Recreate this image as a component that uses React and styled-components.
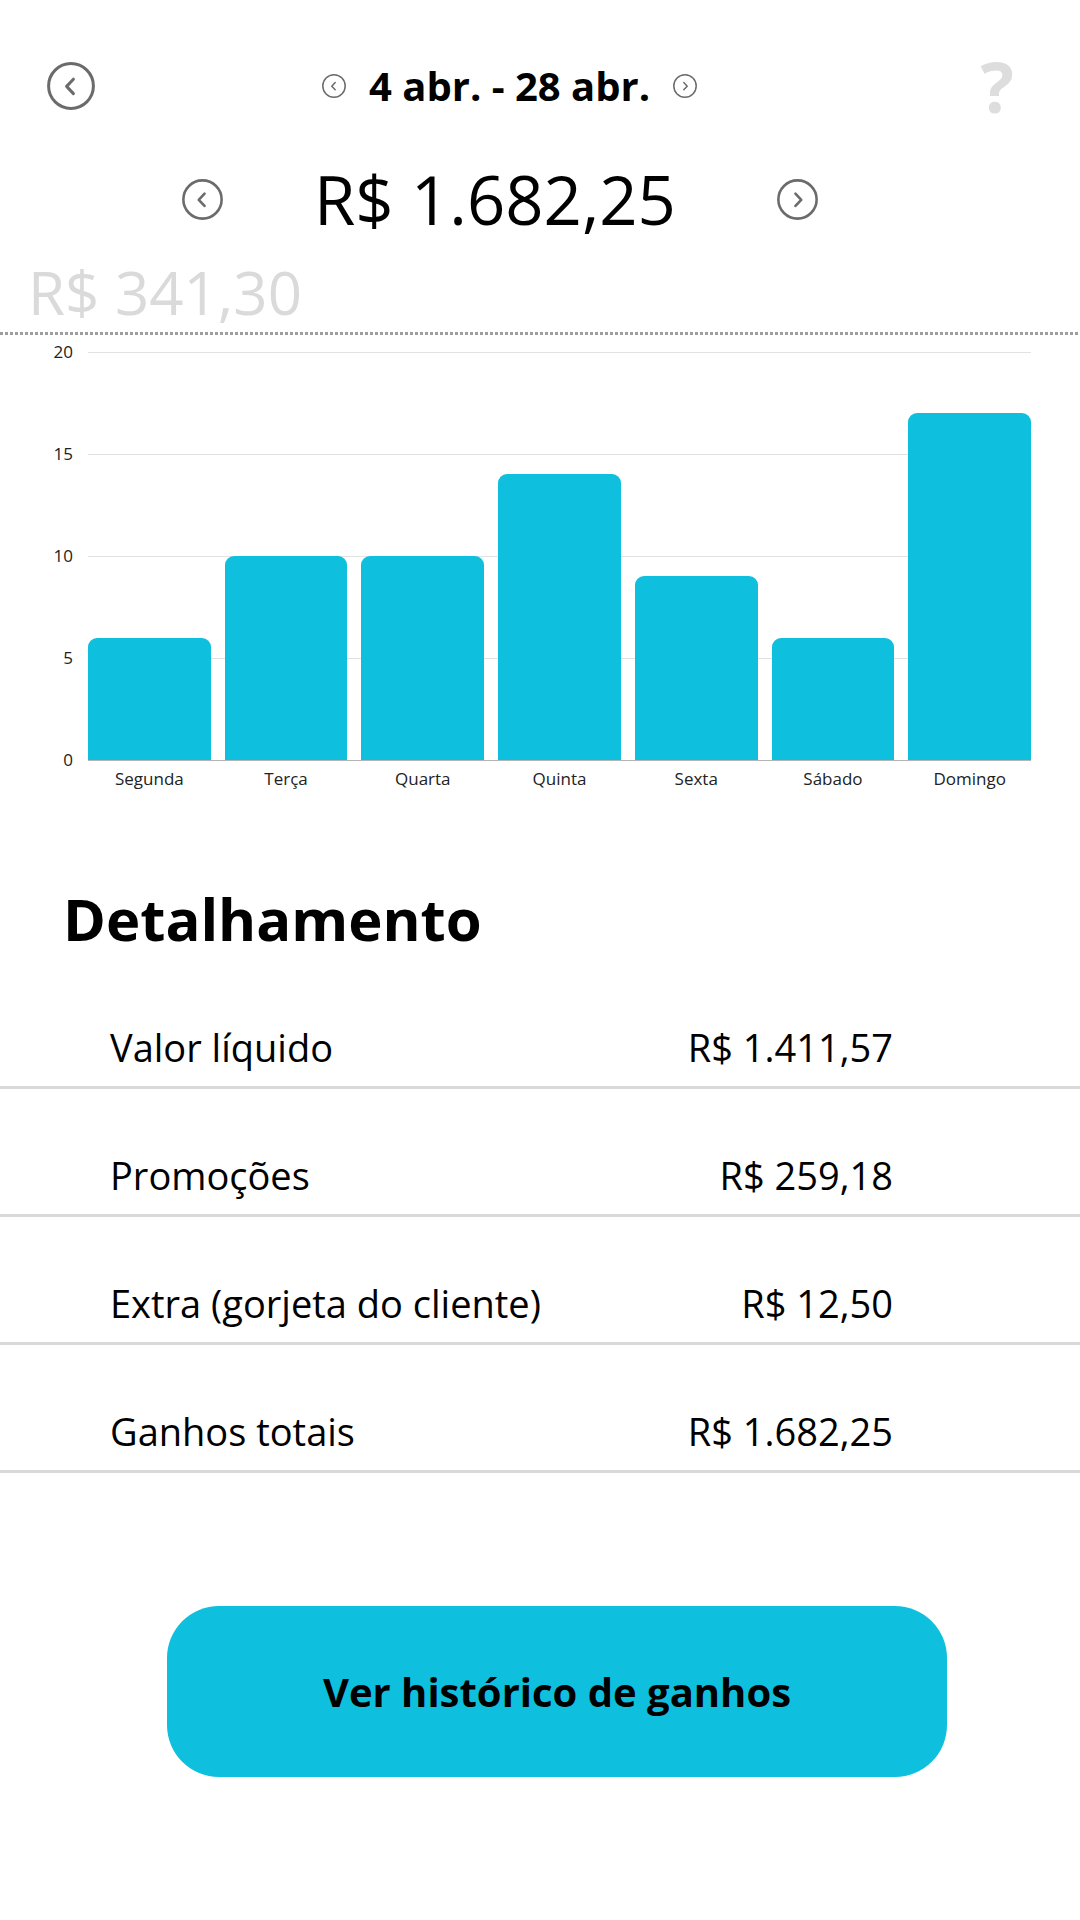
import React from 'react';
import styled, { createGlobalStyle } from 'styled-components';

const GlobalStyle = createGlobalStyle`
  body {
    margin: 0;
    background: #fff;
    font-family: "Open Sans", "Liberation Sans", sans-serif;
    color: #000;
  }
`;

const Screen = styled.div`
  width: 1080px;
  min-height: 1920px;
  background: #fff;
  overflow: hidden;
`;

const TopBar = styled.header`
  display: flex;
  align-items: center;
  height: 48px;
  padding: 62px 66px 0 47px;
`;

const DateNav = styled.div`
  display: flex;
  align-items: center;
  gap: 23px;
  margin-left: 227px;
`;

const DateText = styled.span`
  font-size: 40px;
  font-weight: 700;
  line-height: 1;
`;

const Help = styled.span`
  margin-left: auto;
  font-size: 70px;
  font-weight: 700;
  line-height: 1;
  color: #dddddd;
`;

const AmountRow = styled.div`
  display: flex;
  align-items: center;
  height: 66px;
  margin-top: 56px;
  padding-left: 182px;
`;

const Amount = styled.span`
  font-size: 67px;
  line-height: 1;
  margin: 0 101px 0 91px;
`;

const PrevTotal = styled.div`
  margin-top: 30px;
  padding-left: 28px;
  font-size: 60px;
  line-height: 1;
  color: #dadada;
`;

const Dotted = styled.div`
  margin-top: 10px;
  height: 3px;
  background: repeating-linear-gradient(to right, #9e9e9e 0 3px, transparent 3px 5px);
`;

const Chart = styled.section`
  display: grid;
  grid-template-columns: 73px 943px;
  column-gap: 15px;
  row-gap: 8px;
  margin-top: 17px;
`;

const YAxis = styled.div`
  height: 428px;
  margin: -10px 0;
  display: flex;
  flex-direction: column;
  justify-content: space-between;
  align-items: flex-end;
  font-size: 17px;
  line-height: 20px;
  color: #222;
`;

const Plot = styled.div`
  box-sizing: border-box;
  height: 409px;
  display: flex;
  align-items: flex-end;
  gap: 14px;
  border-bottom: 1px solid #b5b5b5;
  background: repeating-linear-gradient(to bottom, #e2e2e2 0 1px, transparent 1px 102px);
`;

const Bar = styled.div`
  flex: 1;
  background: #0ec0de;
  border-radius: 9px 9px 0 0;
`;

const XAxis = styled.div`
  grid-column: 2;
  display: flex;
  gap: 14px;
`;

const XLabel = styled.span`
  flex: 1;
  text-align: center;
  font-size: 17px;
  line-height: 20px;
  color: #222;
`;

const Heading = styled.h2`
  margin: 101px 0 13px;
  padding-left: 63px;
  font-size: 58px;
  font-weight: 700;
  line-height: 1;
`;

const Row = styled.div`
  display: flex;
  justify-content: space-between;
  align-items: center;
  padding: 67px 187px 20px 110px;
  border-bottom: 3px solid #d9d9d9;
  font-size: 38px;
  line-height: 1;
`;

const HistoryButton = styled.button`
  display: flex;
  align-items: center;
  justify-content: center;
  width: 780px;
  height: 171px;
  margin: 133px 0 0 167px;
  border: none;
  border-radius: 52px;
  background: #0ec0de;
  font-family: inherit;
  font-size: 40px;
  font-weight: 700;
  color: #000;
`;

const CircleChevron = ({ size, dir = 'left' }) => (
  <svg width={size} height={size} viewBox="0 0 24 24" fill="none" stroke="#6b6b6b" strokeWidth="1.5" strokeLinecap="round" strokeLinejoin="round">
    <circle cx="12" cy="12" r="11.2" />
    {dir === 'left'
      ? <path d="M13.2 8.6 L9.8 12.2 L13.2 15.8" />
      : <path d="M10.8 8.6 L14.2 12.2 L10.8 15.8" />}
  </svg>
);

const days = [
  { label: 'Segunda', value: 6 },
  { label: 'Terça', value: 10 },
  { label: 'Quarta', value: 10 },
  { label: 'Quinta', value: 14 },
  { label: 'Sexta', value: 9 },
  { label: 'Sábado', value: 6 },
  { label: 'Domingo', value: 17 },
];

const breakdown = [
  ['Valor líquido', 'R$ 1.411,57'],
  ['Promoções', 'R$ 259,18'],
  ['Extra (gorjeta do cliente)', 'R$ 12,50'],
  ['Ganhos totais', 'R$ 1.682,25'],
];

const App = () => {
  const max = 20;
  return (
    <Screen>
      <GlobalStyle />
      <TopBar>
        <CircleChevron size={48} />
        <DateNav>
          <CircleChevron size={24} />
          <DateText>4 abr. - 28 abr.</DateText>
          <CircleChevron size={24} dir="right" />
        </DateNav>
        <Help>?</Help>
      </TopBar>

      <AmountRow>
        <CircleChevron size={41} />
        <Amount>R$ 1.682,25</Amount>
        <CircleChevron size={41} dir="right" />
      </AmountRow>

      <PrevTotal>R$ 341,30</PrevTotal>
      <Dotted />

      <Chart>
        <YAxis>
          {[20, 15, 10, 5, 0].map((n) => <span key={n}>{n}</span>)}
        </YAxis>
        <Plot>
          {days.map((d) => (
            <Bar key={d.label} style={{ height: `${(d.value / max) * 408}px` }} />
          ))}
        </Plot>
        <XAxis>
          {days.map((d) => <XLabel key={d.label}>{d.label}</XLabel>)}
        </XAxis>
      </Chart>

      <Heading>Detalhamento</Heading>
      {breakdown.map(([label, value]) => (
        <Row key={label}>
          <span>{label}</span>
          <span>{value}</span>
        </Row>
      ))}

      <HistoryButton type="button">Ver histórico de ganhos</HistoryButton>
    </Screen>
  );
};

export default App;
